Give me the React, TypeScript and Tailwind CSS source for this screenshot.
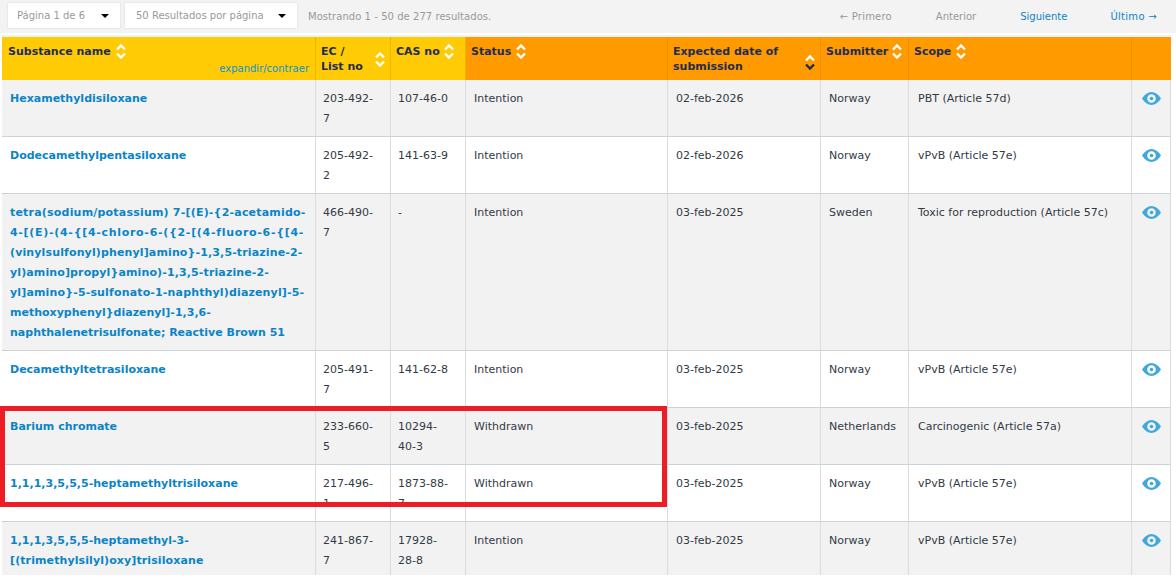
const rows = [
  { name: ["Hexamethyldisiloxane"], ec: ["203-492-", "7"], cas: ["107-46-0"], status: "Intention", date: "02-feb-2026", by: "Norway", scope: "PBT (Article 57d)" },
  { name: ["Dodecamethylpentasiloxane"], ec: ["205-492-", "2"], cas: ["141-63-9"], status: "Intention", date: "02-feb-2026", by: "Norway", scope: "vPvB (Article 57e)" },
  {
    name: [
      "tetra(sodium/potassium) 7-[(E)-{2-acetamido-",
      "4-[(E)-(4-{[4-chloro-6-({2-[(4-fluoro-6-{[4-",
      "(vinylsulfonyl)phenyl]amino}-1,3,5-triazine-2-",
      "yl)amino]propyl}amino)-1,3,5-triazine-2-",
      "yl]amino}-5-sulfonato-1-naphthyl)diazenyl]-5-",
      "methoxyphenyl}diazenyl]-1,3,6-",
      "naphthalenetrisulfonate; Reactive Brown 51",
    ],
    track: ["tracking-[0.2px]", "tracking-[0.7px]", "tracking-[0.13px]", "tracking-[0.12px]", "tracking-[0.15px]", "", ""],
    ec: ["466-490-", "7"], cas: ["-"], status: "Intention", date: "03-feb-2025", by: "Sweden", scope: "Toxic for reproduction (Article 57c)",
  },
  { name: ["Decamethyltetrasiloxane"], ec: ["205-491-", "7"], cas: ["141-62-8"], status: "Intention", date: "03-feb-2025", by: "Norway", scope: "vPvB (Article 57e)" },
  { name: ["Barium chromate"], ec: ["233-660-", "5"], cas: ["10294-", "40-3"], status: "Withdrawn", date: "03-feb-2025", by: "Netherlands", scope: "Carcinogenic (Article 57a)" },
  { name: ["1,1,1,3,5,5,5-heptamethyltrisiloxane"], ec: ["217-496-", "1"], cas: ["1873-88-", "7"], status: "Withdrawn", date: "03-feb-2025", by: "Norway", scope: "vPvB (Article 57e)", cut: true },
  { name: ["1,1,1,3,5,5,5-heptamethyl-3-", "[(trimethylsilyl)oxy]trisiloxane"], track: ["", "tracking-[0.1px]"], ec: ["241-867-", "7"], cas: ["17928-", "28-8"], status: "Intention", date: "03-feb-2025", by: "Norway", scope: "vPvB (Article 57e)" },
];

const SortIcon = ({ active = false }: { active?: boolean }) => (
  <svg width="10" height="17" viewBox="0 0 10 17" fill="none" strokeWidth="2.4" className="shrink-0">
    <path d="M1 6.5 L5 2.5 L9 6.5" stroke="#ffffff" />
    <path d="M1 10.5 L5 14.5 L9 10.5" stroke={active ? "#1f2d50" : "#ffffff"} />
  </svg>
);

const EyeIcon = () => (
  <svg width="19" height="13" viewBox="0 0 19 13" className="mx-auto">
    <path
      fillRule="evenodd"
      fill="#3fa9dc"
      d="M0 6.5 C2.5 2.2 6 0 9.5 0 C13 0 16.5 2.2 19 6.5 C16.5 10.8 13 13 9.5 13 C6 13 2.5 10.8 0 6.5 Z M9.5 2.2 A4.3 4.3 0 1 0 9.5 10.8 A4.3 4.3 0 1 0 9.5 2.2 Z"
    />
    <circle cx="9.5" cy="6.5" r="1.8" fill="#3fa9dc" />
  </svg>
);

const Select = ({ label, className }: { label: string; className: string }) => (
  <div className={`flex items-center justify-between h-[25px] bg-white shadow-[0_0_2px_#d5d5d5] ${className}`}>
    <span className="text-[10px] text-[#999999]">{label}</span>
    <span className="w-0 h-0 border-x-[4px] border-x-transparent border-t-[4px] border-t-black" />
  </div>
);

const Lines = ({ lines, track }: { lines: string[]; track?: string[] }) => (
  <>
    {lines.map((line, i) => (
      <div key={line} className={`whitespace-nowrap ${track ? track[i] : ""}`}>{line}</div>
    ))}
  </>
);

const thBase = "h-[43px] px-[5px] pt-[6px] align-top text-left font-bold text-[#1f2d50] border-r border-r-[#f0b400]";
const tdBase = "px-[8px] pt-[9px] pb-[7px] align-top border-b border-b-[#c9d3da] border-r border-r-[#dcdcdc]";

export default function App() {
  return (
    <div className="h-[579px] w-[1176px] overflow-hidden bg-white relative text-[11px] leading-[20px] text-[#333a45] font-['Verdana','DejaVu_Sans',sans-serif]">
      <div className="h-[575px] overflow-hidden">
        {/* Toolbar */}
        <div className="h-[33px] bg-[#f3f3f3] flex items-start pt-[3px] pl-[8px]">
          <Select label="Página 1 de 6" className="w-[112px] pl-[9px] pr-[11px]" />
          <Select label="50 Resultados por página" className="w-[172px] ml-[5px] pl-[11px] pr-[11px]" />
          <span className="ml-[11px] mt-[4px] text-[10px] text-[#999999] tracking-[0.05px]">Mostrando 1 - 50 de 277 resultados.</span>
          <div className="ml-auto mr-[19px] mt-[4px] flex text-[10px]">
            <span className="text-[#999999] tracking-[0.2px]">← Primero</span>
            <span className="ml-[44px] text-[#999999]">Anterior</span>
            <span className="ml-[44px] text-[#0b84c6]">Siguiente</span>
            <span className="ml-[43px] text-[#0b84c6] tracking-[0.3px]">Último →</span>
          </div>
        </div>

        <div className="mt-[2px] ml-[2px] w-[1169px] h-[2px] bg-[#f2f2f2]" />

        {/* Substances table */}
        <table className="ml-[2px] w-[1169px] table-fixed border-separate border-spacing-0">
          <colgroup>
            <col className="w-[314px]" />
            <col className="w-[75px]" />
            <col className="w-[75px]" />
            <col className="w-[202px]" />
            <col className="w-[153px]" />
            <col className="w-[88px]" />
            <col className="w-[223px]" />
            <col className="w-[39px]" />
          </colgroup>
          <thead>
            <tr>
              <th className={`${thBase} !pl-[6px] bg-[#ffcb05] relative`}>
                <div className="flex items-center gap-[5px] h-[17px]">Substance name <SortIcon /></div>
                <span className="absolute right-[6px] bottom-[4px] font-normal text-[10px] leading-[14px] text-[#0b94d3]">expandir/contraer</span>
              </th>
              <th className={`${thBase} bg-[#ffcb05]`}>
                <div className="flex items-center justify-between pt-[1px] leading-[15px]"><span>EC /<br />List no</span><SortIcon /></div>
              </th>
              <th className={`${thBase} bg-[#ffcb05]`}>
                <div className="flex items-center gap-[4px] h-[17px]">CAS no <SortIcon /></div>
              </th>
              <th className={`${thBase} bg-[#ff9a00] border-r-[#f09000]`}>
                <div className="flex items-center gap-[5px] h-[17px]">Status <SortIcon /></div>
              </th>
              <th className={`${thBase} bg-[#ff9a00] border-r-[#f09000]`}>
                <div className="flex items-center justify-between pt-[1px] leading-[15px]"><span>Expected date of<br />submission</span><span className="mt-[6px]"><SortIcon active /></span></div>
              </th>
              <th className={`${thBase} bg-[#ff9a00] border-r-[#f09000]`}>
                <div className="flex items-center gap-[4px] h-[17px]">Submitter <SortIcon /></div>
              </th>
              <th className={`${thBase} bg-[#ff9a00] border-r-[#f09000]`}>
                <div className="flex items-center gap-[5px] h-[17px]">Scope <SortIcon /></div>
              </th>
              <th className="h-[43px] bg-[#ff9a00]" />
            </tr>
          </thead>
          <tbody>
            {rows.map((row, i) => (
              <tr key={row.name[0]} className={i % 2 === 0 ? "bg-[#f2f2f2]" : "bg-white"}>
                <td className={`${tdBase} font-bold text-[#0b84c6]`}><Lines lines={row.name} track={row.track} /></td>
                <td className={`${tdBase} !px-[7px]`}>
                  <div className={row.cut ? "h-[34px] mb-[6px] overflow-hidden" : ""}><Lines lines={row.ec} /></div>
                </td>
                <td className={`${tdBase} !px-[7px]`}>
                  <div className={row.cut ? "h-[34px] mb-[6px] overflow-hidden" : ""}><Lines lines={row.cas} /></div>
                </td>
                <td className={tdBase}>{row.status}</td>
                <td className={tdBase}>{row.date}</td>
                <td className={tdBase}>{row.by}</td>
                <td className={`${tdBase} !pl-[9px]`}>{row.scope}</td>
                <td className={`${tdBase} !px-0 !pt-[12px]`}><EyeIcon /></td>
              </tr>
            ))}
          </tbody>
        </table>
      </div>

      {/* Red highlight drawn over the table */}
      <div className="absolute left-0 top-[406px] w-[667px] h-[101px] border-[5px] border-[#ee1c25] pointer-events-none" />
    </div>
  );
}
